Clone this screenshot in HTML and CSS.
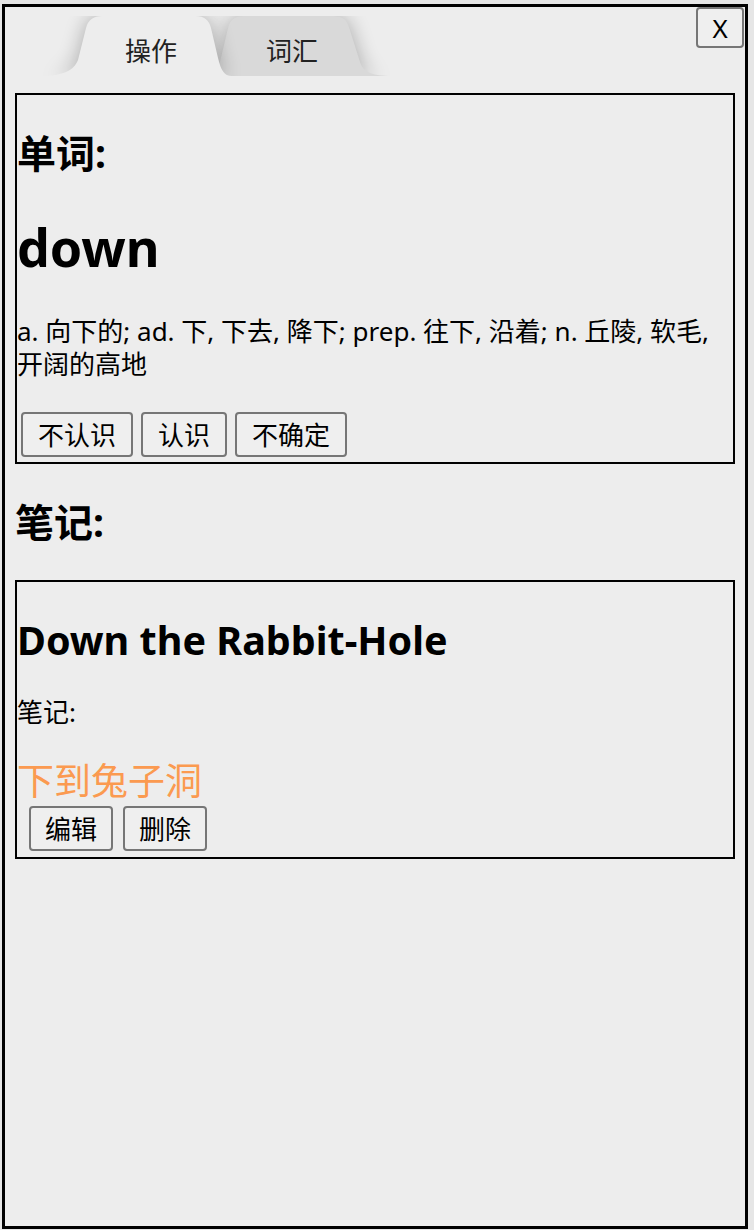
FILE: index.html
```html
<!DOCTYPE html>
<html lang="zh-CN">
<head>
<meta charset="utf-8">
<title>单词</title>
<link rel="stylesheet" href="styles.css">
</head>
<body>
<div class="panel">
  <div class="panel-head">
    <div class="tabs">
      <svg class="tabs-bg" width="420" height="60" viewBox="5 16 420 60" aria-hidden="true">
        <defs>
          <filter id="tabShadow" filterUnits="userSpaceOnUse" x="-50" y="-20" width="520" height="140">
            <feGaussianBlur stdDeviation="10"/>
          </filter>
        </defs>
        <path d="M224 76 Q218 76 219 66 L228 28 Q231 16 243 16 L334 16 Q346 16 349 27 L360 62 C363 72 372 76 392 76 Z" fill="#000" opacity="0.28" filter="url(#tabShadow)"/>
        <path d="M224 76 Q218 76 219 66 L228 28 Q231 16 243 16 L334 16 Q346 16 349 27 L360 62 C363 72 372 76 392 76 Z" fill="#d9d9d9"/>
        <path d="M40 76 C64 76 74 70 78 60 L86 28 Q89 16 102 16 L196 16 Q208 16 211 28 L218 58 C221 70 224 76 232 76 Z" fill="#000" opacity="0.28" filter="url(#tabShadow)"/>
        <path d="M40 76 C64 76 74 70 78 60 L86 28 Q89 16 102 16 L196 16 Q208 16 211 28 L218 58 C221 70 224 76 232 76 Z" fill="#ededed"/>
      </svg>
      <div class="tab-labels">
        <span class="tab-label">操作</span>
        <span class="tab-label">词汇</span>
      </div>
    </div>
    <button class="close">X</button>
  </div>

  <div class="panel-body">
    <section class="box word-box">
      <h2 class="label">单词:</h2>
      <h1 class="word">down</h1>
      <p class="def">a. 向下的; ad. 下, 下去, 降下; prep. 往下, 沿着; n. 丘陵, 软毛, 开阔的高地</p>
      <div class="actions word-actions">
        <button class="btn">不认识</button>
        <button class="btn">认识</button>
        <button class="btn">不确定</button>
      </div>
    </section>

    <h2 class="label">笔记:</h2>

    <section class="box note-box">
      <h2 class="note-title">Down the Rabbit-Hole</h2>
      <p class="note-label">笔记:</p>
      <div class="note-text">下到兔子洞</div>
      <div class="actions note-actions">
        <button class="btn">编辑</button>
        <button class="btn">删除</button>
      </div>
    </section>
  </div>
</div>
</body>
</html>
```

FILE: styles.css
```css
html, body {
  margin: 0;
  padding: 0;
}

body {
  background: #e6e6e6;
  font-family: "Noto Sans", "Noto Sans CJK SC", sans-serif;
  color: #000;
  min-height: 1230px;
}

.panel {
  position: fixed;
  left: 2px;
  top: 4px;
  width: 746px;
  height: 1225px;
  box-sizing: border-box;
  border: 3px solid #000;
  background: #ededed;
  overflow: hidden;
}

.panel-head {
  display: flex;
  justify-content: space-between;
  align-items: flex-start;
  height: 86px;
}

.tabs {
  display: grid;
  margin-top: 9px;
  width: 420px;
  height: 60px;
}

.tabs > * {
  grid-area: 1 / 1;
}

.tabs-bg {
  display: block;
}

.tab-labels {
  display: flex;
  gap: 41px;
  padding: 18px 0 0 96px;
}

.tab-label {
  width: 100px;
  text-align: center;
  font-size: 26px;
  line-height: 34px;
  color: #222;
}

.close {
  margin: 0 1px 0 0;
  width: 48px;
  height: 41px;
  padding: 0;
  box-sizing: border-box;
  border: 2px solid #767676;
  border-radius: 4px;
  background: #efefef;
  font-family: "Noto Sans", sans-serif;
  font-size: 26px;
  line-height: 1;
  color: #000;
}

.panel-body {
  padding: 0 10px;
}

.box {
  border: 2px solid #000;
}

.label {
  margin: 32px 0;
  font-size: 39px;
  line-height: 52px;
  font-weight: 700;
}

.word {
  margin: 33px 0;
  font-size: 52px;
  line-height: 70px;
  font-weight: 700;
}

.def {
  margin: 33px 0 0;
  font-size: 26px;
  line-height: 33px;
  word-break: keep-all;
}

.actions {
  display: flex;
  align-items: flex-start;
}

.word-actions {
  margin-top: 31px;
  padding: 0 4px 5px;
  gap: 8px;
}

.btn {
  height: 45px;
  margin: 0;
  padding: 0 15px;
  box-sizing: border-box;
  border: 2px solid #767676;
  border-radius: 4px;
  background: #efefef;
  font-family: "Noto Sans", "Noto Sans CJK SC", sans-serif;
  font-size: 26px;
  line-height: 1;
  color: #000;
}

.note-box {
  margin-top: 32px;
}

.note-title {
  margin: 32px 0 30px;
  font-size: 39.5px;
  line-height: 52px;
  font-weight: 700;
}

.note-label {
  margin: 0;
  font-size: 26px;
  line-height: 33px;
}

.note-text {
  margin-top: 26px;
  font-size: 37px;
  line-height: 51px;
  color: #fb9a50;
}

.note-actions {
  padding: 0 12px 6px;
  gap: 10px;
}

.note-actions .btn {
  padding: 0 14px;
}
```
